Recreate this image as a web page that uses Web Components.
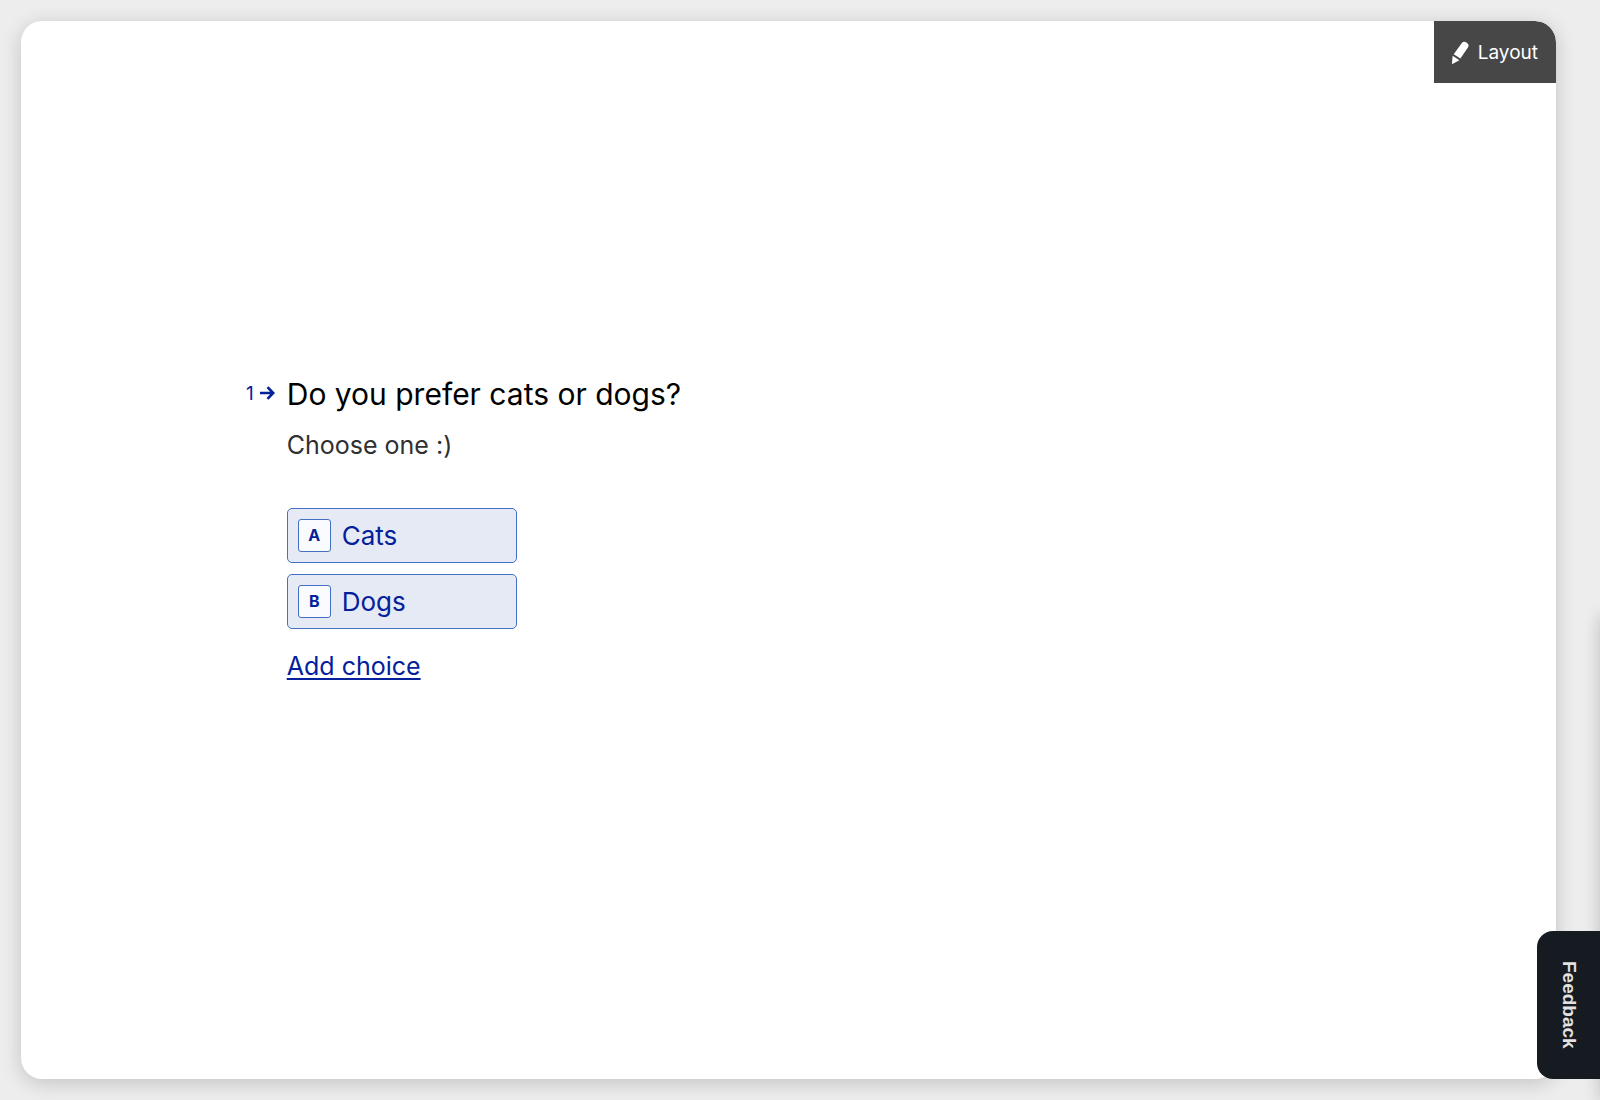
<!DOCTYPE html>
<html lang="en">
<head>
  <meta charset="utf-8">
  <title>Question preview</title>
  <style>
    body {
      --ink: #04209b;
      --line: #4370c4;
      margin: 0;
      background: #ededed;
      color: #000;
      font-family: Inter, "Liberation Sans", sans-serif;
    }
  </style>
</head>
<body>

  <template id="formPreview">
    <style>
      :host {
        display: flex;
        box-sizing: border-box;
        min-height: 100vh;
        padding: 21px 44px 21px 21px;
        overflow: hidden;
      }
      main {
        flex: 1;
        display: flex;
        flex-direction: column;
        background: #fff;
        border-radius: 21px;
        overflow: hidden;
        box-shadow: 0 4px 20px rgba(0, 0, 0, .18);
      }
      header {
        display: flex;
        justify-content: flex-end;
      }
      .stage {
        flex: 1;
        display: flex;
        align-items: center;
        padding: 0 225px 104px;
      }
    </style>
    <main>
      <header><slot name="toolbar"></slot></header>
      <div class="stage"><slot></slot></div>
    </main>
  </template>

  <template id="layoutButton">
    <style>
      :host {
        display: block;
      }
      button {
        display: flex;
        align-items: center;
        gap: 8px;
        padding: 20px 18px 18px 16px;
        border: 0;
        border-top-right-radius: 21px;
        background: #474747;
        color: #fff;
        font: 400 19px/24px Inter, sans-serif;
        cursor: pointer;
      }
      button:hover {
        background: #333;
      }
    </style>
    <button type="button">
      <svg width="20" height="24" viewBox="0 0 20 24" fill="#fff" aria-hidden="true">
        <path d="M3.7 13.3 11.7 2.2Q13.5-.2 16.5 1.4 19.7 3.4 17.9 6.4L10.4 17.6Z"/>
        <path d="M2.6 14.8 9.4 19.2 1.9 23.2Z"/>
      </svg>
      <slot></slot>
    </button>
  </template>

  <template id="formQuestion">
    <style>
      :host {
        display: flex;
        gap: 12px;
      }
      .number {
        display: flex;
        align-items: center;
        gap: 6px;
        height: 38px;
        color: var(--ink);
        font-size: 19px;
      }
      h1 {
        margin: 0;
        font-size: 30px;
        line-height: 40px;
        font-weight: 400;
      }
      .hint {
        margin: 13px 0 45px;
        color: #303030;
        font-size: 25px;
        line-height: 36px;
      }
      .choices {
        display: flex;
        flex-direction: column;
        align-items: flex-start;
        gap: 11px;
      }
    </style>
    <div class="number">
      <slot name="number"></slot>
      <svg width="15" height="14" viewBox="0 0 15 14" fill="none" stroke="currentColor" stroke-width="2.6" aria-hidden="true">
        <path d="M0 7H12.5M7.5 1.2 13.2 7 7.5 12.8"/>
      </svg>
    </div>
    <div>
      <h1><slot name="title"></slot></h1>
      <p class="hint"><slot name="hint"></slot></p>
      <div class="choices"><slot></slot></div>
    </div>
  </template>

  <template id="formChoice">
    <style>
      :host {
        display: block;
      }
      button {
        display: flex;
        align-items: center;
        gap: 11px;
        min-width: 230px;
        padding: 10px;
        border: 1px solid var(--line);
        border-radius: 5px;
        background: #e6eaf5;
        color: var(--ink);
        font: 400 26px/33px Inter, sans-serif;
        cursor: pointer;
      }
      button:hover {
        background: #d9dff0;
      }
      .key {
        box-sizing: border-box;
        width: 33px;
        height: 33px;
        border: 1px solid var(--line);
        border-radius: 3px;
        background: #fafbff;
        font-size: 16px;
        line-height: 31px;
        font-weight: 700;
        text-align: center;
      }
    </style>
    <button type="button"><span class="key"></span><slot></slot></button>
  </template>

  <template id="addChoice">
    <style>
      :host {
        display: block;
        margin-top: 8px;
      }
      a {
        color: var(--ink);
        font-size: 25px;
        line-height: 36px;
        text-decoration-thickness: 2px;
        text-underline-offset: 3px;
        text-decoration-skip-ink: none;
      }
    </style>
    <a href="#add"><slot></slot></a>
  </template>

  <template id="feedbackTab">
    <style>
      :host {
        position: fixed;
        right: 0;
        bottom: 21px;
      }
      button {
        display: block;
        width: 63px;
        height: 148px;
        padding: 0;
        border: 0;
        border-radius: 16px 0 0 16px;
        background: #161b21;
        color: #e2e2e2;
        font: 700 19px/24px "Liberation Sans", sans-serif;
        writing-mode: vertical-rl;
        cursor: pointer;
      }
    </style>
    <button type="button"><slot></slot></button>
  </template>

  <template id="sideDrawer">
    <style>
      /* closed: only the shadow reaches into the window */
      :host {
        position: fixed;
        left: 100%;
        top: 56%;
        bottom: 0;
        width: 320px;
        background: #fff;
        box-shadow: 0 0 16px rgba(0, 0, 0, .2);
      }
    </style>
  </template>

  <form-preview>
    <layout-button slot="toolbar">Layout</layout-button>
    <form-question>
      <span slot="number">1</span>
      <span slot="title">Do you prefer cats or dogs?</span>
      <span slot="hint">Choose one :)</span>
      <form-choice key="A">Cats</form-choice>
      <form-choice key="B">Dogs</form-choice>
      <add-choice>Add choice</add-choice>
    </form-question>
  </form-preview>
  <side-drawer></side-drawer>
  <feedback-tab>Feedback</feedback-tab>

  <script>
    class TemplateElement extends HTMLElement {
      constructor() {
        super();
        const t = document.querySelector('#' + this.constructor.template);
        this.attachShadow({mode: 'open'}).appendChild(t.content.cloneNode(true));
      }
    }

    class FormPreview extends TemplateElement {
      static template = 'formPreview';
    }

    class LayoutButton extends TemplateElement {
      static template = 'layoutButton';
    }

    class FormQuestion extends TemplateElement {
      static template = 'formQuestion';
    }

    class FormChoice extends TemplateElement {
      static template = 'formChoice';

      static get observedAttributes() {
        return ['key'];
      }

      attributeChangedCallback(name, oldValue, newValue) {
        this.shadowRoot.querySelector('.key').textContent = newValue;
      }
    }

    class AddChoice extends TemplateElement {
      static template = 'addChoice';
    }

    class FeedbackTab extends TemplateElement {
      static template = 'feedbackTab';
    }

    class SideDrawer extends TemplateElement {
      static template = 'sideDrawer';
    }

    customElements.define('form-preview', FormPreview);
    customElements.define('layout-button', LayoutButton);
    customElements.define('form-question', FormQuestion);
    customElements.define('form-choice', FormChoice);
    customElements.define('add-choice', AddChoice);
    customElements.define('feedback-tab', FeedbackTab);
    customElements.define('side-drawer', SideDrawer);
  </script>
</body>
</html>
